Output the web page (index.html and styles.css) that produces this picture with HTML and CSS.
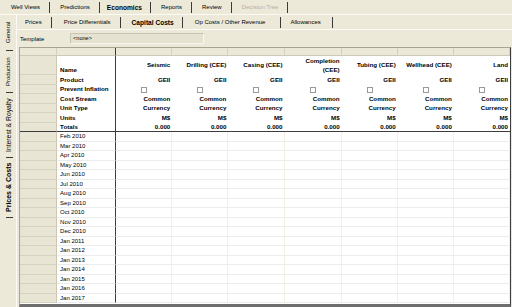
FILE: index.html
```html
<!DOCTYPE html>
<html>
<head>
<meta charset="utf-8">
<link rel="stylesheet" href="styles.css">
</head>
<body>
<div class="app">
  <nav class="toptabs">
    <span class="tab">Well Views</span>
    <span class="tab">Predictions</span>
    <span class="tab active">Economics</span>
    <span class="tab">Reports</span>
    <span class="tab">Review</span>
    <span class="tab disabled">Decision Tree</span>
  </nav>
  <div class="main">
    <aside class="vtabs">
      <div class="vtab v-general"><span class="vlabel">General</span></div>
      <div class="vtab v-production"><span class="vlabel">Production</span></div>
      <div class="vtab v-interest"><span class="vlabel">Interest &amp; Royalty</span></div>
      <div class="vtab v-prices active"><span class="vlabel">Prices &amp; Costs</span></div>
    </aside>
    <section class="panel">
      <nav class="subtabs">
        <span class="stab">Prices</span>
        <span class="stab">Price Differentials</span>
        <span class="stab active">Capital Costs</span>
        <span class="stab">Op Costs / Other Revenue</span>
        <span class="stab">Allowances</span>
      </nav>
      <div class="template">
        <span class="tlabel">Template</span>
        <span class="tinput">&lt;none&gt;</span>
      </div>
      <div class="gridwrap">
        <table class="grid">
          <colgroup>
            <col class="c-rh"><col class="c-lb">
            <col class="c-d"><col class="c-d"><col class="c-d"><col class="c-d7"><col class="c-d"><col class="c-d"><col class="c-d">
          </colgroup>
          <tr class="band"><th></th><th class="lbh"></th><th></th><th></th><th></th><th></th><th></th><th></th><th></th></tr>
          <tr class="namerow"><td class="rh"></td><td class="lb b bottom">Name</td><td class="v">Seismic</td><td class="v">Drilling (CEE)</td><td class="v">Casing (CEE)</td><td class="v">Completion<br>(CEE)</td><td class="v">Tubing (CEE)</td><td class="v">Wellhead (CEE)</td><td class="v">Land</td></tr>
          <tr class="prop"><td class="rh"></td><td class="lb b">Product</td><td class="v">GEII</td><td class="v">GEII</td><td class="v">GEII</td><td class="v">GEII</td><td class="v">GEII</td><td class="v">GEII</td><td class="v">GEII</td></tr>
          <tr class="prop"><td class="rh"></td><td class="lb b">Prevent Inflation</td><td class="cb"><span class="box"></span></td><td class="cb"><span class="box"></span></td><td class="cb"><span class="box"></span></td><td class="cb"><span class="box"></span></td><td class="cb"><span class="box"></span></td><td class="cb"><span class="box"></span></td><td class="cb"><span class="box"></span></td></tr>
          <tr class="prop"><td class="rh"></td><td class="lb b">Cost Stream</td><td class="v">Common</td><td class="v">Common</td><td class="v">Common</td><td class="v">Common</td><td class="v">Common</td><td class="v">Common</td><td class="v">Common</td></tr>
          <tr class="prop"><td class="rh"></td><td class="lb b">Unit Type</td><td class="v">Currency</td><td class="v">Currency</td><td class="v">Currency</td><td class="v">Currency</td><td class="v">Currency</td><td class="v">Currency</td><td class="v">Currency</td></tr>
          <tr class="prop"><td class="rh"></td><td class="lb b">Units</td><td class="v">M$</td><td class="v">M$</td><td class="v">M$</td><td class="v">M$</td><td class="v">M$</td><td class="v">M$</td><td class="v">M$</td></tr>
          <tr class="prop totals"><td class="rh"></td><td class="lb b">Totals</td><td class="v">0.000</td><td class="v">0.000</td><td class="v">0.000</td><td class="v">0.000</td><td class="v">0.000</td><td class="v">0.000</td><td class="v">0.000</td></tr>
          <tr class="d"><td class="rh"></td><td class="lb">Feb 2010</td><td></td><td></td><td></td><td></td><td></td><td></td><td></td></tr>
          <tr class="d"><td class="rh"></td><td class="lb">Mar 2010</td><td></td><td></td><td></td><td></td><td></td><td></td><td></td></tr>
          <tr class="d"><td class="rh"></td><td class="lb">Apr 2010</td><td></td><td></td><td></td><td></td><td></td><td></td><td></td></tr>
          <tr class="d"><td class="rh"></td><td class="lb">May 2010</td><td></td><td></td><td></td><td></td><td></td><td></td><td></td></tr>
          <tr class="d"><td class="rh"></td><td class="lb">Jun 2010</td><td></td><td></td><td></td><td></td><td></td><td></td><td></td></tr>
          <tr class="d"><td class="rh"></td><td class="lb">Jul 2010</td><td></td><td></td><td></td><td></td><td></td><td></td><td></td></tr>
          <tr class="d"><td class="rh"></td><td class="lb">Aug 2010</td><td></td><td></td><td></td><td></td><td></td><td></td><td></td></tr>
          <tr class="d"><td class="rh"></td><td class="lb">Sep 2010</td><td></td><td></td><td></td><td></td><td></td><td></td><td></td></tr>
          <tr class="d"><td class="rh"></td><td class="lb">Oct 2010</td><td></td><td></td><td></td><td></td><td></td><td></td><td></td></tr>
          <tr class="d"><td class="rh"></td><td class="lb">Nov 2010</td><td></td><td></td><td></td><td></td><td></td><td></td><td></td></tr>
          <tr class="d"><td class="rh"></td><td class="lb">Dec 2010</td><td></td><td></td><td></td><td></td><td></td><td></td><td></td></tr>
          <tr class="d"><td class="rh"></td><td class="lb">Jan 2011</td><td></td><td></td><td></td><td></td><td></td><td></td><td></td></tr>
          <tr class="d"><td class="rh"></td><td class="lb">Jan 2012</td><td></td><td></td><td></td><td></td><td></td><td></td><td></td></tr>
          <tr class="d"><td class="rh"></td><td class="lb">Jan 2013</td><td></td><td></td><td></td><td></td><td></td><td></td><td></td></tr>
          <tr class="d"><td class="rh"></td><td class="lb">Jan 2014</td><td></td><td></td><td></td><td></td><td></td><td></td><td></td></tr>
          <tr class="d"><td class="rh"></td><td class="lb">Jan 2015</td><td></td><td></td><td></td><td></td><td></td><td></td><td></td></tr>
          <tr class="d"><td class="rh"></td><td class="lb">Jan 2016</td><td></td><td></td><td></td><td></td><td></td><td></td><td></td></tr>
          <tr class="d"><td class="rh"></td><td class="lb">Jan 2017</td><td></td><td></td><td></td><td></td><td></td><td></td><td></td></tr>
        </table>
      </div>
    </section>
  </div>
</div>
</body>
</html>
```
FILE: styles.css
```css
* { box-sizing: border-box; }
html, body { margin: 0; padding: 0; }
body {
  width: 512px;
  height: 307px;
  overflow: hidden;
  background: #ece9d8;
  font-family: "Liberation Sans", Arial, sans-serif;
  font-size: 6px;
  color: #000;
}
.app { display: flex; flex-direction: column; height: 307px; }

/* top tabs */
.toptabs {
  display: flex;
  align-items: center;
  height: 15px;
  padding-left: 1px;
  border-bottom: 1px solid #fbfaf5;
}
.tab {
  padding: 0 9px 0 10px;
  line-height: 11px;
  border-right: 1px solid #3a3a3a;
  white-space: nowrap;
}
.tab.active { font-weight: bold; font-size: 6.6px; padding: 0 8px 0 7px; }
.tab.disabled { color: #b4b1a3; }

.main { display: flex; flex: 1; min-height: 0; }

/* vertical tabs */
.vtabs {
  width: 17px;
  display: flex;
  flex-direction: column;
  border-right: 1px solid #fbfaf5;
}
.vtab {
  display: flex;
  flex-direction: column;
  align-items: center;
}
.vtab::after {
  content: "";
  display: block;
  width: 7px;
  height: 1px;
  margin-left: 2px;
  background: #3a3a3a;
}
.vlabel {
  flex: 1;
  display: flex;
  align-items: center;
  justify-content: center;
  writing-mode: vertical-rl;
  transform: rotate(180deg);
  line-height: 9px;
  white-space: nowrap;
}
.v-general { height: 36px; }
.v-production { height: 42px; }
.v-interest { height: 65px; }
.v-interest .vlabel { font-size: 6.8px; }
.v-prices { height: 60px; }
.vtab.active .vlabel { font-weight: bold; font-size: 7px; }

/* panel */
.panel { flex: 1; display: flex; flex-direction: column; min-width: 0; }
.subtabs {
  display: flex;
  align-items: center;
  height: 15px;
  border-bottom: 1px solid #fbfaf5;
}
.stab {
  padding: 0 9px 0 8px;
  line-height: 11px;
  border-right: 1px solid #3a3a3a;
  white-space: nowrap;
}
.stab:nth-child(2) { padding: 0 9px 0 12px; }
.stab.active { font-weight: bold; font-size: 6.6px; padding: 0 8px 0 11px; }
.stab:nth-child(4) { padding: 0 15px 0 12px; }
.stab:nth-child(5) { padding: 0 11px 0 9px; }

.template {
  display: flex;
  align-items: center;
  height: 17px;
  padding-left: 3px;
}
.tlabel { width: 50px; }
.tinput {
  width: 134px;
  height: 11px;
  line-height: 9px;
  padding-left: 2px;
  background: #e5e2d2;
  border: 1px solid #c9c5b3;
  border-right-color: #f6f5ee;
  border-bottom-color: #f6f5ee;
  font-size: 5.6px;
}

/* grid */
.gridwrap {
  margin-left: 2px;
  width: 492px;
  flex: 1;
  background: #fff;
  border-top: 1px solid #a8a492;
  border-left: 1px solid #a8a492;
  border-right: 1px solid #3c3c3c;
  border-bottom: 3px solid #6e6e6e;
  overflow: hidden;
}
.grid {
  border-collapse: separate;
  border-spacing: 0;
  table-layout: fixed;
  width: 490px;
}
.c-rh { width: 37px; }
.c-lb { width: 59px; }
.c-d { width: 56px; }
.c-d7 { width: 57px; }
.grid th, .grid td {
  padding: 0;
  line-height: 8px;
  white-space: nowrap;
  overflow: hidden;
}
.band { height: 8px; }
.band th {
  background: #ebe8d8;
  border-right: 1px solid #d4d0be;
  border-bottom: 1px solid #cdc9b6;
}
.band th.lbh { border-right: 1px solid #3c3c3c; }
.namerow { height: 19px; }
.prop, .d { height: 9.5px; }
.rh {
  background: #e8e5d4;
  border-right: 1px solid #cbc7b4;
  border-bottom: 1px solid #d6d2c0;
}
.lb {
  padding-left: 3px !important;
  border-right: 1px solid #3c3c3c;
  vertical-align: middle;
}
.b { font-weight: bold; font-size: 6.2px; }
.bottom { vertical-align: bottom; padding-bottom: 1px !important; }
.v {
  text-align: right;
  padding-right: 2px !important;
  font-weight: bold;
  font-size: 6.2px;
  vertical-align: middle;
}
.namerow .v { white-space: normal; line-height: 8.5px; }
.cb { text-align: center; vertical-align: middle; }
.box {
  display: inline-block;
  width: 6px;
  height: 6px;
  border: 1px solid #9a9a9a;
  background: #fff;
  vertical-align: middle;
}
.totals td { border-bottom: 1px solid #3c3c3c; }
.d td { border-bottom: 1px solid #ececec; }
.d td:not(.rh):not(.lb) { border-right: 1px solid #f1efe6; }
.d td.rh { border-bottom-color: #d6d2c0; }
.d td:last-child { border-right: 0; }
```
